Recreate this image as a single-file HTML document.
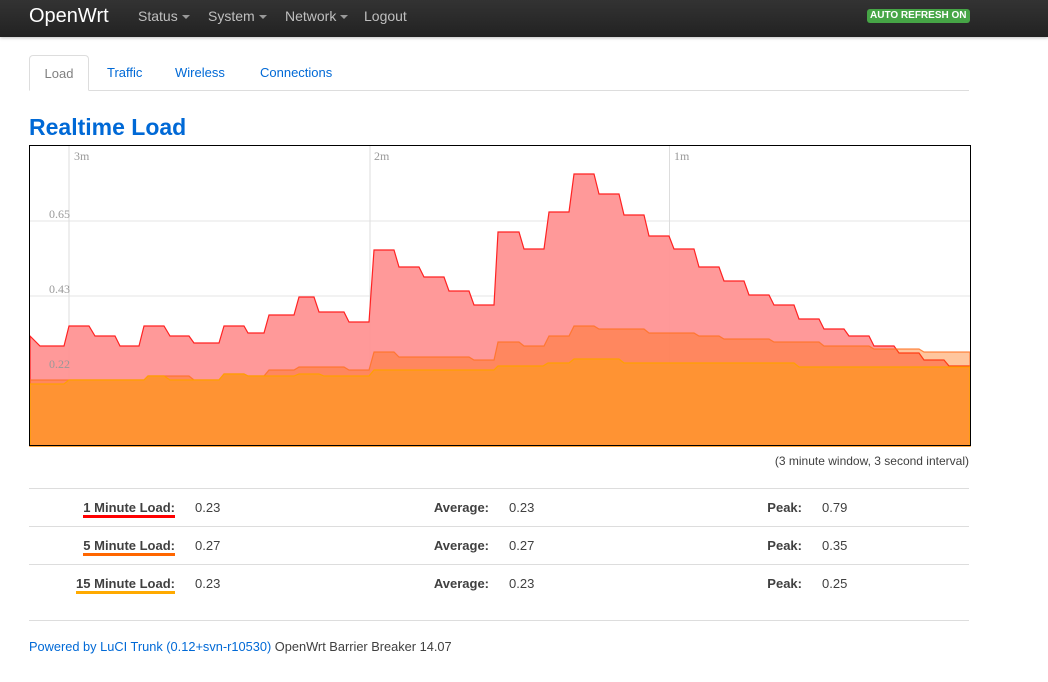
<!DOCTYPE html>
<html><head><meta charset="utf-8"><style>
*{margin:0;padding:0;box-sizing:border-box}
body{width:1048px;height:682px;background:#fff;font-family:"Liberation Sans",sans-serif;font-size:13px;color:#404040;position:relative;overflow:hidden}
.nav{position:absolute;left:0;top:0;width:1048px;height:37px;background:linear-gradient(#333,#222);box-shadow:0 1px 3px rgba(0,0,0,.25)}
.brand{position:absolute;left:29px;top:5px;color:#fff;font-size:20px}
.mi{position:absolute;top:8px;color:#bfbfbf;font-size:14px}
.car{display:inline-block;width:0;height:0;border-left:4px solid transparent;border-right:4px solid transparent;border-top:4px solid #999;margin-left:4px;vertical-align:middle}
.badge{position:absolute;left:867px;top:9px;background:#46a546;color:#fff;font-weight:bold;font-size:10px;padding:1px 3px;border-radius:3px;line-height:12px}
.tabs{position:absolute;left:29px;top:90px;width:940px;border-top:1px solid #ddd}
.tab{position:absolute;top:66px;font-size:13px;color:#0069d6;line-height:1}
.tl{position:absolute;left:29px;top:55px;width:60px;height:36px;border:1px solid #ddd;border-bottom:1px solid #fff;border-radius:4px 4px 0 0;background:#fff;color:#808080;text-align:center;line-height:35px;font-size:13px}
h2{position:absolute;left:29px;top:114px;font-size:23px;color:#0069d6;font-weight:bold}
.cap{position:absolute;right:79px;top:454px;font-size:12px}
.hl{position:absolute;left:29px;width:940px;border-top:1px solid #ddd}
.r{position:absolute;font-size:13px}
.lb{font-weight:bold;text-align:right}
.u{border-bottom:3px solid;padding-bottom:0px}
.ft{position:absolute;left:29px;top:639px;font-size:12.8px}
.ft a{color:#0069d6;text-decoration:none}
</style></head><body>
<div class="nav">
<div class="brand">OpenWrt</div>
<div class="mi" style="left:138px">Status<span class="car"></span></div>
<div class="mi" style="left:208px">System<span class="car"></span></div>
<div class="mi" style="left:285px">Network<span class="car"></span></div>
<div class="mi" style="left:364px">Logout</div>
<div class="badge">AUTO REFRESH ON</div>
</div>
<div class="tabs"></div>
<div class="tl">Load</div>
<div class="tab" style="left:107px">Traffic</div>
<div class="tab" style="left:175px">Wireless</div>
<div class="tab" style="left:260px">Connections</div>
<h2>Realtime Load</h2>
<svg style="position:absolute;left:0;top:0" width="1048" height="682">
<rect x="29.5" y="145.5" width="941" height="300" fill="#fff"/>
<g stroke="#eee" stroke-width="1.5"><line x1="30" y1="221" x2="970" y2="221"/><line x1="30" y1="296" x2="970" y2="296"/><line x1="30" y1="371" x2="970" y2="371"/></g>
<g stroke="#ddd"><line x1="69" y1="146" x2="69" y2="446"/><line x1="370" y1="146" x2="370" y2="446"/><line x1="669.5" y1="146" x2="669.5" y2="446"/></g>
<path fill="#ff9494" fill-opacity=".95" stroke="#f22" stroke-width="1.2" d="M30,336 L40,346 L64,346 L69,326 L89,326 L95,336 L115,336 L120,346 L139,346 L144,326 L164,326 L170,336 L189,336 L194,343 L219,343 L224,326 L244,326 L248,333 L264,333 L269,315 L294,315 L299,297 L314,297 L319,312 L344,312 L349,322 L369,322 L374,250 L394,250 L399,267 L419,267 L424,277 L444,277 L449,291 L469,291 L474,305 L494,305 L498,232 L519,232 L524,249 L544,249 L549,212 L569,212 L574,174 L594,174 L599,194 L619,194 L624,215 L644,215 L649,236 L669,236 L674,249 L694,249 L699,267 L719,267 L724,281 L744,281 L749,295 L769,295 L774,305 L794,305 L799,319 L819,319 L824,329 L844,329 L849,336 L869,336 L874,346 L894,346 L899,353 L919,353 L924,360 L944,360 L949,366 L970,366 L970,446 L30,446Z"/>
<path fill="rgb(255,104,0)" fill-opacity=".38" stroke="#ff7020" stroke-opacity=".8" stroke-width="1.2" d="M30,380 L144,380 L148,376 L189,376 L194,380 L219,380 L224,374 L244,374 L248,376 L264,376 L269,370 L294,370 L299,367 L344,367 L349,370 L369,370 L374,352 L394,352 L399,357 L469,357 L474,360 L494,360 L498,342 L519,342 L524,346 L544,346 L549,336 L569,336 L574,326 L594,326 L599,329 L644,329 L649,333 L694,333 L699,336 L719,336 L724,339 L769,339 L774,342 L819,342 L824,346 L869,346 L874,349 L919,349 L924,352 L970,352 L970,446 L30,446Z"/>
<path fill="#ff9333" stroke="#ffa000" stroke-width="1.2" d="M30,384 L64,384 L69,380 L144,380 L148,376 L164,376 L170,380 L219,380 L224,374 L244,374 L248,376 L294,376 L299,374 L319,374 L324,376 L369,376 L374,370 L494,370 L498,366 L543,366 L548,363 L569,363 L574,359 L619,359 L624,363 L794,363 L799,367 L970,367 L970,446 L30,446Z"/>
<rect x="29.5" y="145.5" width="941" height="300" fill="none" stroke="#000"/>
<g font-family="Liberation Serif,serif" font-size="12" fill="#999"><text x="74" y="160">3m</text><text x="374" y="160">2m</text><text x="674" y="160">1m</text><text x="49" y="218">0.65</text><text x="49" y="293">0.43</text><text x="49" y="368">0.22</text></g>
</svg>
<div class="cap">(3 minute window, 3 second interval)</div>
<div class="hl" style="top:488px"></div><div class="hl" style="top:526px"></div><div class="hl" style="top:564px"></div><div class="hl" style="top:620px"></div>
<div class="r lb" style="right:873px;top:500px"><span class="u" style="border-color:#f00">1 Minute Load:</span></div>
<div class="r" style="left:195px;top:500px">0.23</div>
<div class="r lb" style="right:559px;top:500px">Average:</div><div class="r" style="left:509px;top:500px">0.23</div>
<div class="r lb" style="right:246px;top:500px">Peak:</div><div class="r" style="left:822px;top:500px">0.79</div>
<div class="r lb" style="right:873px;top:538px"><span class="u" style="border-color:#ff6600">5 Minute Load:</span></div>
<div class="r" style="left:195px;top:538px">0.27</div>
<div class="r lb" style="right:559px;top:538px">Average:</div><div class="r" style="left:509px;top:538px">0.27</div>
<div class="r lb" style="right:246px;top:538px">Peak:</div><div class="r" style="left:822px;top:538px">0.35</div>
<div class="r lb" style="right:873px;top:576px"><span class="u" style="border-color:#ffaa00">15 Minute Load:</span></div>
<div class="r" style="left:195px;top:576px">0.23</div>
<div class="r lb" style="right:559px;top:576px">Average:</div><div class="r" style="left:509px;top:576px">0.23</div>
<div class="r lb" style="right:246px;top:576px">Peak:</div><div class="r" style="left:822px;top:576px">0.25</div>
<div class="ft"><a>Powered by LuCI Trunk (0.12+svn-r10530)</a> OpenWrt Barrier Breaker 14.07</div>
</body></html>
